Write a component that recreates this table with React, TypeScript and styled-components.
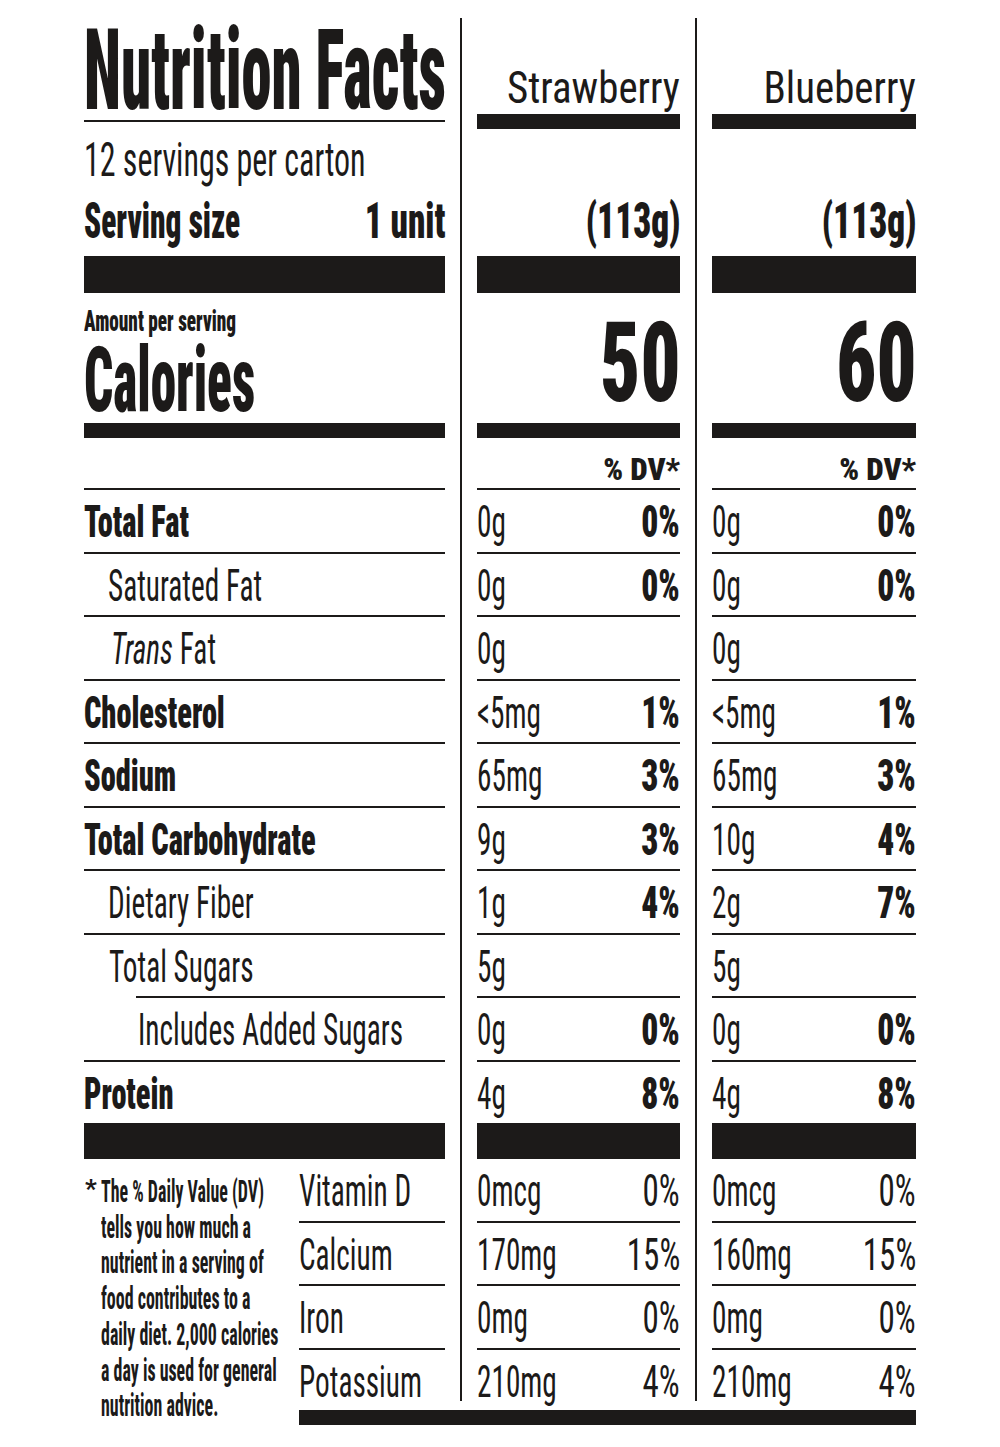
import React from "react";
import styled, { createGlobalStyle, css } from "styled-components";

const INK = "#1c1a19";
const FONT = `"Roboto Condensed", "Roboto", "Liberation Sans", sans-serif`;

/* horizontal compression factors (Helvetica Condensed look) */
const K = {
  title: 0.532,
  servings: 0.652,
  servingSize: 0.626,
  unit: 0.7,
  flavor: 0.93,
  weight: 0.705,
  amount: 0.64,
  calories: 0.57,
  calNum: 0.706,
  dv: 1.0,
  label: 0.69,
  pctBold: 0.76,
  reg: 0.665,
  pct: 0.75,
  foot: 0.56,
};

const Global = createGlobalStyle`
  html, body { margin: 0; padding: 0; background: #fff; }
  body { color: ${INK}; font-family: ${FONT}; }
  * { box-sizing: border-box; }
`;

const squeeze = (k: number, right = false) => css`
  display: inline-block;
  white-space: nowrap;
  transform: scaleX(${k});
  transform-origin: ${right ? "right" : "left"} center;
`;

const Label = styled.main`
  width: 832px;
  margin-left: 84px;
  padding-top: 18px;
  display: flex;
  flex-direction: column;
`;

const Row = styled.div<{ $h?: number }>`
  display: flex;
  ${(p) => (p.$h ? `height: ${p.$h}px;` : "")}
`;

const Sep = styled.div`
  width: 32px;
  flex: none;
  display: flex;
  justify-content: center;
  &::before {
    content: "";
    width: 2px;
    background: ${INK};
  }
`;

const MainCell = styled.div`
  width: 361px;
  flex: none;
  display: flex;
  flex-direction: column;
`;

const ValCell = styled.div<{ $w: number }>`
  width: ${(p) => p.$w}px;
  flex: none;
  display: flex;
  flex-direction: column;
`;

const Bar = styled.div<{ $t: number; $mt?: number }>`
  height: ${(p) => p.$t}px;
  margin-top: ${(p) => p.$mt ?? 0}px;
  background: ${INK};
  flex: none;
`;

const Rule = styled.div<{ $inset?: number }>`
  height: 2px;
  flex: none;
  background: ${INK};
  margin-left: ${(p) => p.$inset ?? 0}px;
`;

/* ---------- header ---------- */
const TitleBox = styled.div`
  margin-top: 2px;
  height: 100px;
  line-height: 100px;
  font-size: 114px;
  font-weight: 900;
`;
const TitleText = styled.h1`
  margin: 0;
  font: inherit;
  ${squeeze(K.title)}
`;

const Servings = styled.div`
  height: 76px;
  line-height: 76px;
  font-size: 49px;
  font-weight: 400;
  span { ${squeeze(K.servings)} }
`;

const ServingSize = styled.div`
  height: 46px;
  line-height: 46px;
  font-size: 50px;
  font-weight: 900;
  display: flex;
  justify-content: space-between;
  & > span:first-child { flex: 1; min-width: 0; }
  & > span:first-child > span { ${squeeze(K.servingSize)} }
  & > span:last-child > span { ${squeeze(K.unit, true)} }
`;

const FlavorName = styled.div`
  margin-top: 48px;
  height: 44px;
  line-height: 44px;
  font-size: 44px;
  font-weight: 400;
  text-align: right;
  span { ${squeeze(K.flavor, true)} }
`;

const Weight = styled.div`
  margin-top: 67px;
  height: 50px;
  line-height: 50px;
  font-size: 50px;
  font-weight: 900;
  text-align: right;
  span { ${squeeze(K.weight, true)} }
`;

/* ---------- calories ---------- */
const Amount = styled.div`
  margin-top: 13px;
  height: 30px;
  line-height: 30px;
  font-size: 30px;
  font-weight: 900;
  span { ${squeeze(K.amount)} }
`;

const CaloriesLabel = styled.div`
  height: 90px;
  line-height: 90px;
  font-size: 90px;
  font-weight: 900;
  span { ${squeeze(K.calories)} }
`;

const CaloriesNum = styled.div`
  margin-top: 15px;
  height: 111px;
  line-height: 111px;
  font-size: 111px;
  font-weight: 900;
  text-align: right;
  span { ${squeeze(K.calNum, true)} }
`;

const DV = styled.div`
  margin-top: 16px;
  height: 31px;
  line-height: 31px;
  font-size: 31px;
  font-weight: 900;
  text-align: right;
  span { ${squeeze(K.dv, true)} }
`;

const Spacer = styled.div`
  flex: 1;
`;

/* ---------- nutrient rows ---------- */
const Line = styled.div<{ $h?: number; $indent?: number }>`
  height: ${(p) => p.$h ?? 61.5}px;
  padding-top: 4px;
  padding-left: ${(p) => p.$indent ?? 0}px;
  line-height: 57.5px;
  font-size: 44px;
  display: flex;
  justify-content: space-between;
  flex: none;
`;

const Name = styled.span<{ $bold?: boolean }>`
  font-weight: ${(p) => (p.$bold ? 900 : 400)};
  ${(p) => squeeze(p.$bold ? K.label : K.reg)}
  i { font-style: italic; }
`;

const Amt = styled.span`
  font-weight: 400;
  ${squeeze(K.reg)}
`;

const Pct = styled.span<{ $bold?: boolean }>`
  font-weight: ${(p) => (p.$bold ? 900 : 400)};
  ${(p) => squeeze(p.$bold ? K.pctBold : K.pct, true)}
`;

/* ---------- footnote / vitamins ---------- */
const Footnote = styled.div`
  width: 215px;
  flex: none;
  display: flex;
  padding-top: 15px;
  font-size: 32px;
  font-weight: 700;
  line-height: 35.7px;
`;

const Star = styled.span`
  width: 17px;
  flex: none;
  font-size: 26px;
  line-height: 30px;
  padding-left: 1px;
`;

const FootLines = styled.div`
  display: flex;
  flex-direction: column;
  span { ${squeeze(K.foot)} }
`;

const VitBlock = styled.div`
  width: 617px;
  flex: none;
  display: flex;
  flex-direction: column;
`;

const VitName = styled.div`
  width: 146px;
  flex: none;
  display: flex;
  flex-direction: column;
`;

const BottomBar = styled.div`
  margin-top: 9px;
  height: 15px;
  background: ${INK};
`;

type Val = [string, string?];
interface Nut {
  name: React.ReactNode;
  bold?: boolean;
  indent?: number;
  inset?: number;
  last?: boolean;
  s: Val;
  b: Val;
}

const nutrients: Nut[] = [
  { name: "Total Fat", bold: true, s: ["0g", "0%"], b: ["0g", "0%"] },
  { name: "Saturated Fat", indent: 24, s: ["0g", "0%"], b: ["0g", "0%"] },
  { name: <><i>Trans</i> Fat</>, indent: 27, s: ["0g"], b: ["0g"] },
  { name: "Cholesterol", bold: true, s: ["<5mg", "1%"], b: ["<5mg", "1%"] },
  { name: "Sodium", bold: true, s: ["65mg", "3%"], b: ["65mg", "3%"] },
  { name: "Total Carbohydrate", bold: true, s: ["9g", "3%"], b: ["10g", "4%"] },
  { name: "Dietary Fiber", indent: 24, s: ["1g", "4%"], b: ["2g", "7%"] },
  { name: "Total Sugars", indent: 25, inset: 52, s: ["5g"], b: ["5g"] },
  { name: "Includes Added Sugars", indent: 54, s: ["0g", "0%"], b: ["0g", "0%"] },
  { name: "Protein", bold: true, last: true, s: ["4g", "8%"], b: ["4g", "8%"] },
];

const vitamins: { name: string; s: Val; b: Val }[] = [
  { name: "Vitamin D", s: ["0mcg", "0%"], b: ["0mcg", "0%"] },
  { name: "Calcium", s: ["170mg", "15%"], b: ["160mg", "15%"] },
  { name: "Iron", s: ["0mg", "0%"], b: ["0mg", "0%"] },
  { name: "Potassium", s: ["210mg", "4%"], b: ["210mg", "4%"] },
];

const footLines = [
  "The % Daily Value (DV)",
  "tells you how much a",
  "nutrient in a serving of",
  "food contributes to a",
  "daily diet. 2,000 calories",
  "a day is used for general",
  "nutrition advice.",
];

const BarRow = ({ t }: { t: number }) => (
  <Row $h={t}>
    <MainCell><Bar $t={t} /></MainCell>
    <Sep />
    <ValCell $w={203}><Bar $t={t} /></ValCell>
    <Sep />
    <ValCell $w={204}><Bar $t={t} /></ValCell>
  </Row>
);

const FlavorHead = ({ name }: { name: string }) => (
  <>
    <FlavorName><span>{name}</span></FlavorName>
    <Bar $t={15} $mt={4} />
    <Weight><span>(113g)</span></Weight>
  </>
);

export default function App() {
  return (
    <>
      <Global />
      <Label>
        <Row $h={238}>
          <MainCell>
            <TitleBox><TitleText>Nutrition Facts</TitleText></TitleBox>
            <Rule />
            <Servings><span>12 servings per carton</span></Servings>
            <ServingSize>
              <span><span>Serving size</span></span>
              <span><span>1 unit</span></span>
            </ServingSize>
          </MainCell>
          <Sep />
          <ValCell $w={203}><FlavorHead name="Strawberry" /></ValCell>
          <Sep />
          <ValCell $w={204}><FlavorHead name="Blueberry" /></ValCell>
        </Row>
        <BarRow t={37} />
        <Row $h={130}>
          <MainCell>
            <Amount><span>Amount per serving</span></Amount>
            <CaloriesLabel><span>Calories</span></CaloriesLabel>
          </MainCell>
          <Sep />
          <ValCell $w={203}><CaloriesNum><span>50</span></CaloriesNum></ValCell>
          <Sep />
          <ValCell $w={204}><CaloriesNum><span>60</span></CaloriesNum></ValCell>
        </Row>
        <BarRow t={15} />
        <Row $h={52}>
          <MainCell><Spacer /><Rule /></MainCell>
          <Sep />
          <ValCell $w={203}><DV><span>% DV*</span></DV><Spacer /><Rule /></ValCell>
          <Sep />
          <ValCell $w={204}><DV><span>% DV*</span></DV><Spacer /><Rule /></ValCell>
        </Row>
        {nutrients.map((n, i) => (
          <Row key={i}>
            <MainCell>
              <Line $indent={n.indent}>
                <Name $bold={n.bold}>{n.name}</Name>
              </Line>
              {!n.last && <Rule $inset={n.inset} />}
            </MainCell>
            <Sep />
            <ValCell $w={203}>
              <Line>
                <Amt>{n.s[0]}</Amt>
                {n.s[1] && <Pct $bold>{n.s[1]}</Pct>}
              </Line>
              {!n.last && <Rule />}
            </ValCell>
            <Sep />
            <ValCell $w={204}>
              <Line>
                <Amt>{n.b[0]}</Amt>
                {n.b[1] && <Pct $bold>{n.b[1]}</Pct>}
              </Line>
              {!n.last && <Rule />}
            </ValCell>
          </Row>
        ))}
        <BarRow t={36} />
        <Row>
          <Footnote>
            <Star>*</Star>
            <FootLines>
              {footLines.map((l) => (
                <span key={l}>{l}</span>
              ))}
            </FootLines>
          </Footnote>
          <VitBlock>
            {vitamins.map((v, i) => {
              const last = i === vitamins.length - 1;
              const h = last ? 51.5 : 61.5;
              return (
                <Row key={i}>
                  <VitName>
                    <Line $h={h}><Name>{v.name}</Name></Line>
                    {!last && <Rule />}
                  </VitName>
                  <Sep />
                  <ValCell $w={203}>
                    <Line $h={h}><Amt>{v.s[0]}</Amt><Pct>{v.s[1]}</Pct></Line>
                    {!last && <Rule />}
                  </ValCell>
                  <Sep />
                  <ValCell $w={204}>
                    <Line $h={h}><Amt>{v.b[0]}</Amt><Pct>{v.b[1]}</Pct></Line>
                    {!last && <Rule />}
                  </ValCell>
                </Row>
              );
            })}
            <BottomBar />
          </VitBlock>
        </Row>
      </Label>
    </>
  );
}
